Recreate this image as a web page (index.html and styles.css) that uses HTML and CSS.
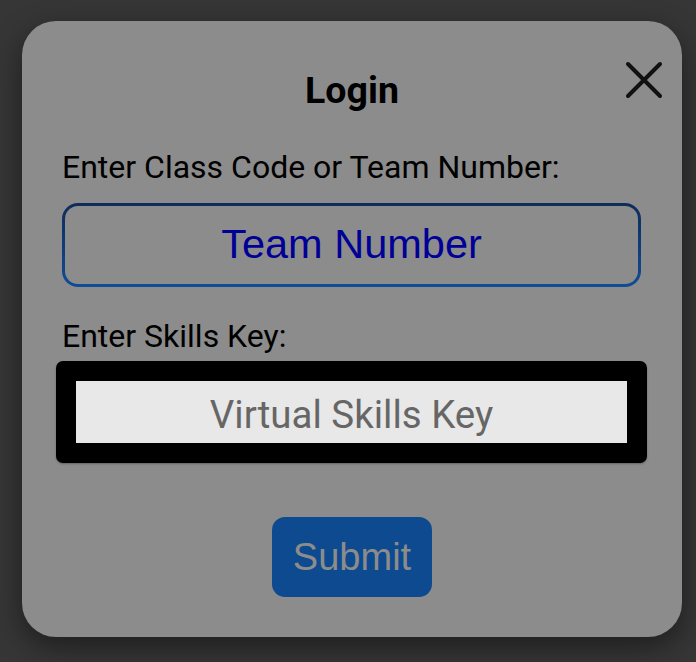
FILE: index.html
```html
<!DOCTYPE html>
<html>
<head>
<meta charset="utf-8">
<link rel="stylesheet" href="styles.css">
</head>
<body>
<div class="modal">
  <button class="close" aria-label="Close">
    <svg width="38" height="38" viewBox="0 0 38 38"><path d="M3 3 L35 35 M35 3 L3 35" stroke="#111" stroke-width="4" stroke-linecap="round" fill="none"/></svg>
  </button>
  <h1 class="title">Login</h1>
  <label class="label label-first">Enter Class Code or Team Number:</label>
  <div class="team-input">Team Number</div>
  <label class="label label-second">Enter Skills Key:</label>
  <div class="key-frame">
    <div class="key-input">Virtual Skills Key</div>
  </div>
  <div class="actions">
    <button class="submit">Submit</button>
  </div>
</div>
</body>
</html>
```

FILE: styles.css
```css
html, body {
  margin: 0;
  padding: 0;
  background: #363636;
  height: 100%;
}
body {
  font-family: Roboto, "Liberation Sans", sans-serif;
  overflow: hidden;
}
.modal {
  position: relative;
  box-sizing: border-box;
  width: 660px;
  height: 616px;
  margin: 21px 0 0 22px;
  background: #8c8c8c;
  border-radius: 34px;
  box-shadow: 0 10px 30px rgba(0,0,0,0.45);
  padding: 47px 41px 0 41px;
  display: flex;
  flex-direction: column;
}
.close {
  position: absolute;
  top: 40px;
  right: 19px;
  background: none;
  border: 0;
  padding: 0;
  width: 38px;
  height: 38px;
  display: block;
}
.close svg { display: block; }
.title {
  margin: 0;
  font-family: Roboto, sans-serif;
  font-weight: 700;
  font-size: 37.5px;
  line-height: 44px;
  text-align: center;
  color: #000;
}
.label {
  display: block;
  font-family: Roboto, sans-serif;
  font-size: 32px;
  line-height: 36px;
  color: #000;
  margin-left: -1px;
}
.label-first { margin-top: 37px; }
.label-second { margin-top: 31px; }
.team-input {
  box-sizing: border-box;
  margin-top: 18px;
  height: 84px;
  width: 579px;
  margin-left: -1px;
  padding-bottom: 3px;
  border: 3px solid transparent;
  border-radius: 16px;
  background:
    linear-gradient(#8c8c8c, #8c8c8c) padding-box,
    linear-gradient(#0e2c5a, #114c96) border-box;
  font-family: "Liberation Sans", Arial, sans-serif;
  font-size: 41.5px;
  color: #000096;
  display: flex;
  align-items: center;
  justify-content: center;
}
.key-frame {
  margin: 7px -6px 0 -7px;
  background: #000;
  border-radius: 7px;
  padding: 20px;
  box-shadow: 0 1px 2px rgba(0,0,0,0.3);
}
.key-input {
  box-sizing: border-box;
  height: 62px;
  padding-top: 5px;
  background: #e8e8e8;
  font-family: Roboto, sans-serif;
  font-size: 38.5px;
  color: #666;
  display: flex;
  align-items: center;
  justify-content: center;
}
.actions {
  display: flex;
  justify-content: center;
  margin-top: 54px;
}
.submit {
  width: 160px;
  height: 80px;
  background: #0e4a8f;
  border: 0;
  border-radius: 13px;
  font-family: "Liberation Sans", Arial, sans-serif;
  font-size: 38px;
  color: #8c8c8c;
  padding: 0;
}
```
